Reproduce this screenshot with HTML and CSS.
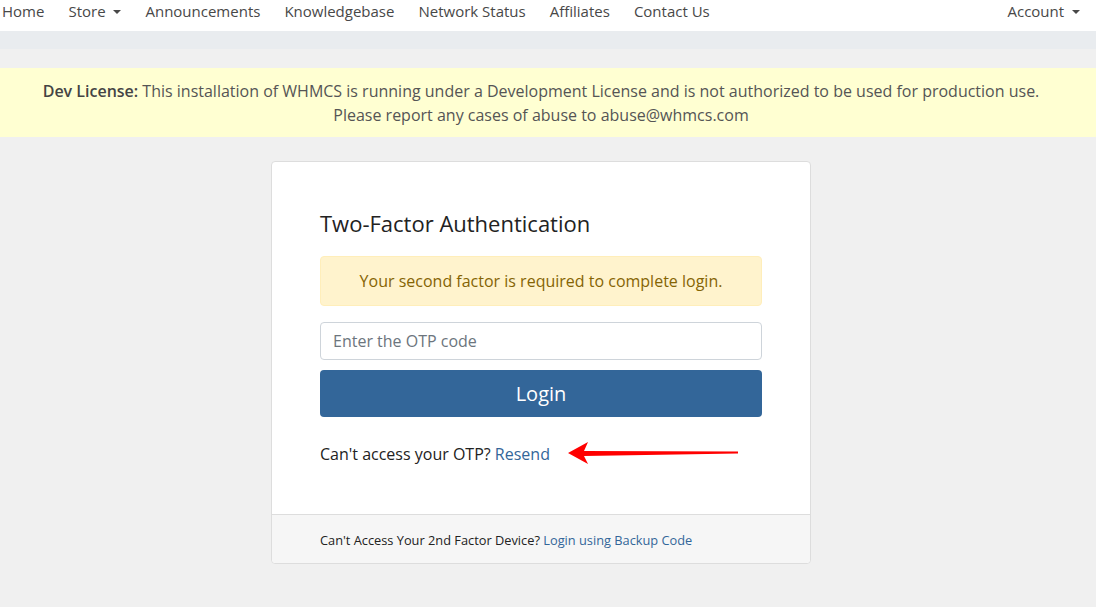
FILE: index.html
```html
<!DOCTYPE html>
<html>
<head>
<meta charset="utf-8">
<link rel="stylesheet" href="styles.css">
</head>
<body>
<nav class="topnav">
  <ul class="nav-left">
    <li><a href="#">Home</a></li>
    <li><a href="#">Store <span class="caret"></span></a></li>
    <li><a href="#">Announcements</a></li>
    <li><a href="#">Knowledgebase</a></li>
    <li><a href="#">Network Status</a></li>
    <li><a href="#">Affiliates</a></li>
    <li><a href="#">Contact Us</a></li>
  </ul>
  <ul class="nav-right">
    <li><a href="#">Account <span class="caret"></span></a></li>
  </ul>
</nav>
<div class="subbar"></div>
<div class="dev-banner">
  <strong>Dev License:</strong> This installation of WHMCS is running under a Development License and is not authorized to be used for production use.<br>
  Please report any cases of abuse to abuse@whmcs.com
</div>
<main class="main">
  <div class="card">
    <div class="card-body">
      <h1 class="title">Two-Factor Authentication</h1>
      <div class="alert">Your second factor is required to complete login.</div>
      <input class="otp" type="text" placeholder="Enter the OTP code">
      <button class="btn-login">Login</button>
      <p class="resend">Can't access your OTP? <a href="#">Resend</a></p>
      <svg class="arrow" width="180" height="30" viewBox="0 0 180 30">
        <path d="M0 14 L20 3 L16 12 L170 12.6 L170 14.4 L16 17 L20 25 Z" fill="#ff0000"/>
      </svg>
    </div>
    <div class="card-footer">Can't Access Your 2nd Factor Device? <a href="#">Login using Backup Code</a></div>
  </div>
</main>
</body>
</html>
```

FILE: styles.css
```css
* { box-sizing: border-box; }
html, body { margin: 0; padding: 0; }
body {
  background: #f0f0f0;
  font-family: "Open Sans", "Noto Sans", sans-serif;
  color: #333;
  font-size: 16px;
}
a { text-decoration: none; }
.topnav {
  background: #fff;
  height: 31px;
  display: flex;
  justify-content: space-between;
}
.topnav ul {
  list-style: none;
  margin: 0;
  padding: 0;
  display: flex;
}
.nav-left { margin-left: -10px !important; }
.nav-right { margin-right: 4px !important; }
.topnav a {
  display: block;
  font-size: 15px;
  line-height: 22px;
  padding: 0 12px;
  color: #484848;
}
.caret {
  display: inline-block;
  width: 0;
  height: 0;
  margin-left: 4px;
  vertical-align: 3px;
  border-top: 4px solid #484848;
  border-left: 4px solid transparent;
  border-right: 4px solid transparent;
}
.subbar {
  height: 18px;
  background: #e9ecef;
}
.dev-banner {
  margin-top: 19px;
  background: #ffffd2;
  text-align: center;
  font-size: 16px;
  line-height: 24px;
  padding: 11px 29px 10px 15px;
  color: #555;
}
.dev-banner strong { color: #444; font-weight: 600; }
.main {
  display: flex;
  justify-content: center;
  padding-top: 24px;
}
.card {
  width: 540px;
  margin-left: -14px;
  background: #fff;
  border: 1px solid #ddd;
  border-radius: 4px;
}
.card-body {
  position: relative;
  padding: 48px 48px 48px 48px;
}
.title {
  margin: 0 0 20px;
  font-size: 22px;
  font-weight: 400;
  line-height: 26px;
  color: #222;
}
.alert {
  background: #fff3cd;
  border: 1px solid #ffeeba;
  border-radius: 4px;
  color: #856404;
  text-align: center;
  padding: 12px;
  line-height: 24px;
  font-size: 16px;
}
.otp {
  display: block;
  width: 100%;
  height: 38px;
  margin-top: 16px;
  border: 1px solid #ced4da;
  border-radius: 4px;
  padding: 0 12px;
  font-family: inherit;
  font-size: 16px;
  color: #495057;
}
.otp::placeholder { color: #6c757d; }
.btn-login {
  display: block;
  width: 100%;
  height: 47px;
  margin-top: 10px;
  border: none;
  border-radius: 4px;
  background: #336699;
  color: #fff;
  font-family: inherit;
  font-size: 20px;
}
.resend {
  margin: 25px 0 0;
  line-height: 24px;
  font-size: 16px;
  color: #222;
}
.resend a { color: #336699; }
.arrow {
  position: absolute;
  left: 296px;
  top: 277px;
}
.card-footer {
  background: #f6f6f6;
  border-top: 1px solid #ddd;
  padding: 15px 48px 13px;
  font-size: 12.8px;
  line-height: 20px;
  color: #222;
  border-radius: 0 0 4px 4px;
}
.card-footer a { color: #336699; }
```
